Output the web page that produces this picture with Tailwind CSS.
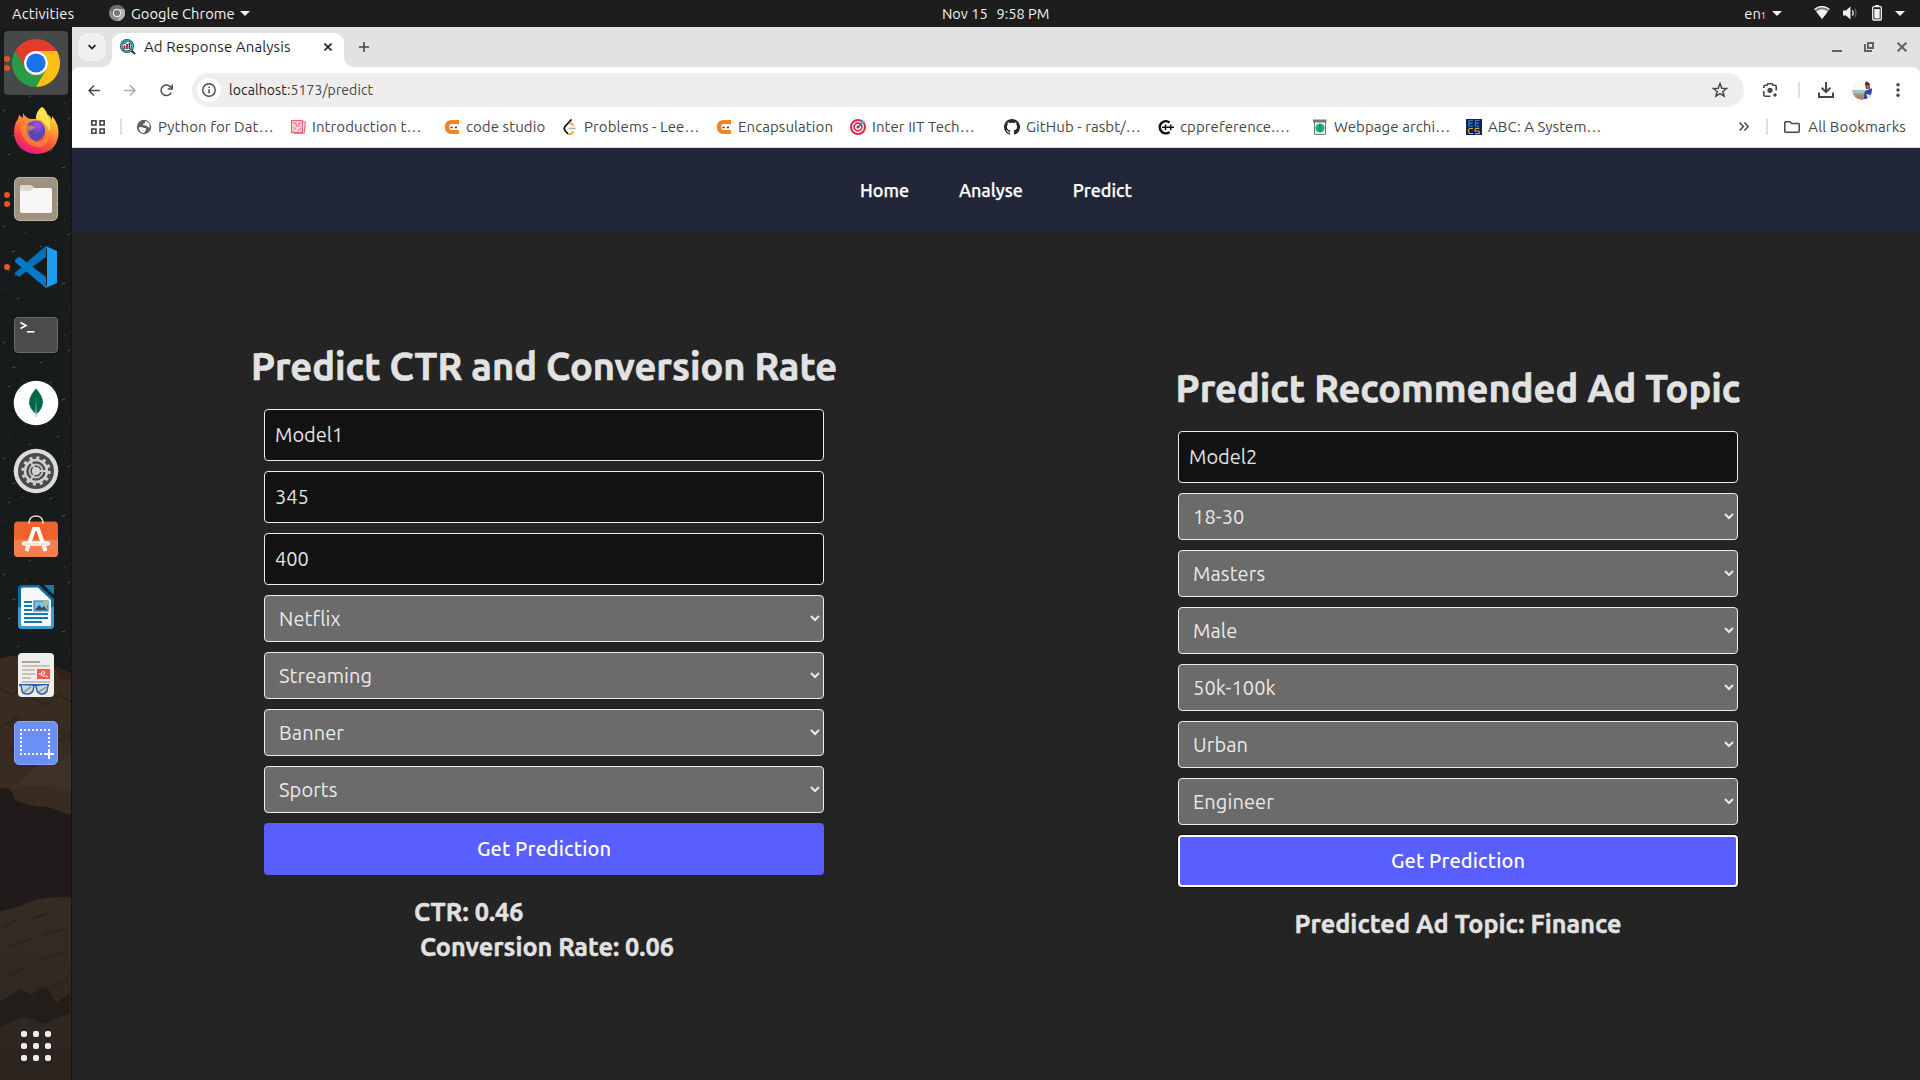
<!DOCTYPE html>
<html lang="en">
<head>
<meta charset="utf-8">
<title>Ad Response Analysis</title>
<script src="https://cdn.jsdelivr.net/npm/@tailwindcss/browser@4"></script>
</head>
<body class="w-[1920px] h-[1080px] overflow-hidden flex flex-col bg-[#242424] font-['Ubuntu','Noto_Sans',sans-serif] text-[15px] tracking-[0.12px]">

<!-- GNOME top bar -->
<header class="h-[27px] shrink-0 bg-[#1d1d1d] text-[#f2f2f2] text-[14.7px] tracking-[0.05px] flex items-center">
  <div class="flex items-center pl-3 w-[942px]">
    <span class="pt-[2px] w-[97px] tracking-[0.2px]">Activities</span>
    <svg class="size-4" viewBox="0 0 16 16"><circle cx="8" cy="8" r="8" fill="#8b8b8b"/><path d="M8 4h7A8 8 0 0 0 1 4l3.500 6A4 4 0 0 1 8 4Z" fill="#6d6d6d"/><path d="M15 4H8a4 4 0 0 1 3.500 6L8 16A8 8 0 0 0 15 4Z" fill="#b4b4b4"/><circle cx="8" cy="8" r="4.200" fill="#eee"/><circle cx="8" cy="8" r="3" fill="#777"/></svg>
    <span class="pt-[2px] ml-[6px]">Google Chrome</span>
    <svg class="ml-[5px] w-[10px] h-[5px]" viewBox="0 0 10 5"><path d="M0 0h10L5 5Z" fill="#f2f2f2"/></svg>
  </div>
  <div class="flex gap-[9px] text-[14.5px] tracking-normal"><span>Nov 15</span><span>9:58 PM</span></div>
  <div class="ml-auto flex items-center justify-end pr-[15px]">
    <span class="pt-[2px]">en<span class="text-[9px]">1</span></span>
    <svg class="ml-[6px] w-[10px] h-[5px]" viewBox="0 0 10 5"><path d="M0 0h10L5 5Z" fill="#f2f2f2"/></svg>
    <svg class="ml-[32px] w-4 h-[14px]" viewBox="0 0 16 14"><path d="M.5 3.500Q8-2.500 15.500 3.500L8 13Z" fill="#777"/><path d="M.5 3.500Q8-2.500 15.500 3.500" fill="none" stroke="#f2f2f2" stroke-width="1.300"/><path d="M2.200 5.500Q8 1 13.800 5.500L8 13Z" fill="#f2f2f2"/></svg>
    <svg class="ml-[12px] w-4 h-[14px]" viewBox="0 0 16 14"><path d="M1 4.500h3L8.500.5v13L4 9.500H1Z" fill="#f2f2f2"/><path d="M10.300 4.300q2 2.700 0 5.400" fill="none" stroke="#ddd" stroke-width="1.300"/><path d="M12.500 2.500q3.200 4.500 0 9" fill="none" stroke="#666" stroke-width="1.200"/></svg>
    <svg class="ml-[14px] w-[10px] h-4" viewBox="0 0 10 16"><path d="M3 0h4v1.500H3Z" fill="#f2f2f2"/><rect x=".7" y="1.700" width="8.600" height="13.300" rx="1" fill="none" stroke="#f2f2f2" stroke-width="1.300"/><rect x="2.300" y="4" width="5.400" height="9.500" fill="#f2f2f2"/></svg>
    <svg class="ml-[13px] w-[10px] h-[5px]" viewBox="0 0 10 5"><path d="M0 0h10L5 5Z" fill="#f2f2f2"/></svg>
  </div>
</header>

<div class="flex flex-1 min-h-0">

<!-- Dock -->
<aside class="relative w-[72px] shrink-0 flex flex-col">
  <svg class="absolute inset-0 w-[72px] h-[1053px]" viewBox="0 0 72 1053">
    <defs>
      <pattern id="stars" width="72" height="116" patternUnits="userSpaceOnUse"><g stroke="#4a4e4f" stroke-width="1" stroke-linecap="round"><path d="M8 12l2-1M50 8l2-1M62 25l3-1M17 40l2-1M29 70l2-1M57 62l2-1M3 84l2-1M68 92l2-1M40 104l2-1M12 109l3-1"/></g><g stroke="#303435" stroke-width="1"><path d="M22 6l2-1M36 22l1-1M4 30l2-1M68 48l2-1M47 45l1-1M9 62l2-1M64 77l2-1M24 90l2-1M54 98l2-1M5 98l1-1M44 76l2-1M33 52l1-1"/></g></pattern>
      <linearGradient id="hill" x1="0" y1="0" x2="0" y2="1"><stop offset="0" stop-color="#372c23"/><stop offset="1" stop-color="#2b241f"/></linearGradient>
    </defs>
    <rect width="72" height="1053" fill="#171b1b"/>
    <rect width="72" height="650" fill="url(#stars)"/>
    <path d="M0 632Q10 627 20 629L34 634 52 640Q60 646 72 653V800H0Z" fill="#382c21"/>
    <path d="M56 640L72 646V654L60 652Z" fill="#33201d"/>
    <path d="M0 662L12 668 24 660 32 672 46 678 60 668 72 676M0 700L18 690 30 704 50 700 72 712M8 726L28 714 44 722 72 706M24 752L48 736 60 745 72 738" fill="none" stroke="#2c231d" stroke-width="1.500"/>
    <path d="M10 762Q30 748 44 732L60 734 72 730V764L40 758Z" fill="#3e3228"/>
    <path d="M0 762Q12 758 14 772Q28 780 48 780L72 788V900H0Z" fill="#211a1a"/>
    <path d="M0 884Q16 882 26 876Q46 868 72 871V1053H0Z" fill="url(#hill)"/>
    <path d="M4 900l14-8M30 892l20-6M10 920l22-8M44 908l20-6M8 950l18-10M38 934l24-8M52 960l16-6M22 972l20-10" stroke="#2a221c" stroke-width="1.500"/>
    <path d="M0 975L20 962 32 968 46 960 56 976 70 966V986L44 996 24 990 0 1000Z" fill="#231d1a"/>
    <rect x="71" width="1" height="1053" fill="#141414"/>
  </svg>
  <nav class="relative flex flex-col gap-1 p-1 flex-1">
    <div class="relative size-16 rounded bg-[#474949] flex items-center justify-center">
      <span class="absolute left-0 top-[25px] flex flex-col gap-[3px]"><i class="size-[6px] rounded-full bg-[#e95420]"></i><i class="size-[6px] rounded-full bg-[#e95420]"></i></span>
      <svg class="size-12" viewBox="0 0 48 48"><path d="M24 12H44.780A24 24 0 0 0 3.220 12L13.610 30A12 12 0 0 1 24 12Z" fill="#e33b2e"/><path d="M3.220 12A24 24 0 0 0 24 48L34.390 30A12 12 0 0 1 13.610 30Z" fill="#2a9c47"/><path d="M44.780 12H24A12 12 0 0 1 34.390 30L24 48A24 24 0 0 0 44.780 12Z" fill="#fcc014"/><circle cx="24" cy="24" r="12" fill="#fff"/><circle cx="24" cy="24" r="9.600" fill="#1a73e8"/></svg>
    </div>
    <div class="size-16 flex items-center justify-center">
      <svg class="size-12" viewBox="0 0 48 48"><defs><linearGradient id="fx" x1=".8" y1="0" x2=".3" y2="1"><stop offset="0" stop-color="#fff44f"/><stop offset=".35" stop-color="#ffa52a"/><stop offset=".7" stop-color="#ff4a3f"/><stop offset="1" stop-color="#e31587"/></linearGradient><radialGradient id="fp" cx=".6" cy=".2"><stop offset="0" stop-color="#a450f0"/><stop offset="1" stop-color="#5b45b0"/></radialGradient></defs>
        <path d="M30 0Q33 2 34 7Q38 8 40 13L40 9Q47 17 46.500 27Q45 46 24 47Q3 45 2 25Q2 17 6 12L7 8L11 11L11 6Q13 10 18 12L24 12Q24 4 30 0Z" fill="url(#fx)"/>
        <path d="M30 0Q24 4 24 12Q34 14 37 24Q40 17 36 10Q34 2 30 0Z" fill="#ffe34a"/>
        <path d="M15 18Q20 12 28 14Q34 18 33 26Q30 34 24 34Q15 33 14 24Z" fill="url(#fp)"/>
        <path d="M8 20Q13 16 24 20Q21 23 16 24Q17 32 24 35Q33 35 36 27Q38 39 27 40Q12 40 8 20Z" fill="#ff9a2e" opacity=".6"/></svg>
    </div>
    <div class="relative size-16 flex items-center justify-center">
      <span class="absolute left-0 top-[25px] flex flex-col gap-[3px]"><i class="size-[6px] rounded-full bg-[#e95420]"></i><i class="size-[6px] rounded-full bg-[#e95420]"></i></span>
      <svg class="size-12" viewBox="0 0 48 48"><rect x="2.500" y="2.500" width="43" height="43" rx="5" fill="#9c927f" stroke="#bcb6a5"/><path d="M8 12q0-2 2-2h9l4 3v9H8Z" fill="#dedacb"/><rect x="8" y="13" width="32" height="25" rx="2" fill="#f8f7f5"/><path d="M8 16l10-0 4-3H10Q8 13 8 15Z" fill="#dedacb"/></svg>
    </div>
    <div class="relative size-16 flex items-center justify-center">
      <i class="absolute left-0 top-[29px] size-[6px] rounded-full bg-[#e95420]"></i>
      <svg class="size-12" viewBox="0 0 48 48"><path d="M33 3L7 31q-2 1-3 2l-1-1q-1-2 1-3L30 6Z" fill="#0065a9"/><path d="M3 30L7 34 34 14V3Z" fill="#0a70b6"/><path d="M3 17L7 13.500 34 34V45L3 19Z" fill="#007acc"/><path d="M33.500 3L45 8V40L33.500 45Q35 43 35 40V8Q35 5 33.500 3Z" fill="#1f9cf0"/></svg>
    </div>
    <div class="size-16 flex items-center justify-center">
      <svg class="size-12" viewBox="0 0 48 48"><rect x="2.500" y="6.500" width="43" height="35" rx="3.500" fill="#4b4b4b" stroke="#6a6a6a"/><path d="M8.500 11.500L14 14.500 8.500 17.500" fill="none" stroke="#fff" stroke-width="1.600"/><path d="M15 20.800h7.500" stroke="#fff" stroke-width="1.600"/></svg>
    </div>
    <div class="size-16 flex items-center justify-center">
      <svg class="size-12" viewBox="0 0 48 48"><circle cx="24" cy="24" r="22.300" fill="#fff"/><path d="M24 9.500Q31 17 31 23.500Q30 31 24.500 35Q18 31 17 24Q17 17 24 9.500Z" fill="#00684a"/><path d="M24 19l.8 19h-1.500Z" fill="#a9c8bb"/></svg>
    </div>
    <div class="size-16 flex items-center justify-center">
      <svg class="size-12" viewBox="0 0 48 48"><circle cx="24" cy="24" r="22.300" fill="#dcdcdc"/><circle cx="24" cy="24" r="18" fill="#4a4a4a"/><circle cx="24" cy="24" r="13" fill="none" stroke="#cfcfcf" stroke-width="3.500" stroke-dasharray="3 3.800"/><circle cx="24" cy="24" r="11" fill="none" stroke="#cfcfcf" stroke-width="2.600"/><circle cx="24" cy="24" r="6.500" fill="none" stroke="#c4c4c4" stroke-width="1.800"/><circle cx="24" cy="24" r="4" fill="#d6d6d6"/><path d="M24 24h11M24 24L18.500 14.500M24 24L18.500 33.500" stroke="#cfcfcf" stroke-width="2"/></svg>
    </div>
    <div class="size-16 flex items-center justify-center">
      <svg class="size-12" viewBox="0 0 48 48"><rect x="2" y="6.500" width="44" height="35.500" rx="4" fill="#ef622c"/><path d="M2 24.500H46V38q0 4-4 4H6q-4 0-4-4Z" fill="#f47e4e"/><path d="M17 9V7q1-6 7-6t7 6v2" fill="none" stroke="#f5dcb4" stroke-width="1.500"/><path d="M14.500 36L22 14H26L33.500 36" fill="none" stroke="#fff" stroke-width="4"/><path d="M12 28.500H36" stroke="#fff" stroke-width="4.500" stroke-linecap="round"/><path d="M12 29H36" stroke="#f5b79c" stroke-width=".8"/></svg>
    </div>
    <div class="size-16 flex items-center justify-center">
      <svg class="size-12" viewBox="0 0 48 48"><path d="M10 2H27L42 16V42q0 4-4 4H10q-4 0-4-4V6q0-4 4-4Z" fill="#0d6ba4"/><path d="M6 24H42V42q0 4-4 4H10q-4 0-4-4Z" fill="#3d9ccc"/><path d="M11 4.500H26L39 17V43H11q-2 0-2-2V6.500q0-2 2-2Z" fill="#f7f7f7"/><path d="M32 2h10v10Z" fill="#1378b0"/><g stroke="#1279b3" stroke-width="2"><path d="M12 19h8M12 23h8M12 27h8M12 31h24M12 35h24M12 39h18"/></g><rect x="22" y="18" width="14" height="10" fill="#7fc0e8" stroke="#1279b3"/><path d="M23 27l4-5 3 3 2-2 3 4Z" fill="#444"/><path d="M31 18h5v4q-3 0-5-4Z" fill="#f0b429"/></svg>
    </div>
    <div class="size-16 flex items-center justify-center">
      <svg class="size-12" viewBox="0 0 48 48"><rect x="6" y="2" width="36" height="44" rx="4" fill="#efeeec"/><path d="M10 11h18" stroke="#aba496" stroke-width="2"/><path d="M10 15h28M10 19h13M10 23h13M10 27h9M10 31h28" stroke="#c6c2b8" stroke-width="2"/><rect x="25" y="18" width="13" height="10" fill="#f25a4c"/><path d="M27 23q4 1 6-1-1-3-3-1-2 4 1 4 3-1 5 1" fill="none" stroke="#fff"/><path d="M7 34H37" stroke="#2360a8" stroke-width="2"/><path d="M9 34l1 6q1 3 5 3t6-3l1-5M24 35l1 5q2 3 5 3t5-3l1-6" fill="#cfd3da" stroke="#2d62a5" stroke-width="1.500"/><path d="M12 41l7-5M27 41l7-5" stroke="#84888f" stroke-width="1.500"/></svg>
    </div>
    <div class="size-16 flex items-center justify-center">
      <svg class="size-12" viewBox="0 0 48 48"><rect x="2.500" y="2.500" width="43" height="43" rx="4.500" fill="#6a90f5" stroke="#86a6fa"/><path d="M8 11H38M8 35H32" stroke="#fff" stroke-width="2" stroke-dasharray="2 2"/><path d="M9 14V34M37 14V30" stroke="#fff" stroke-width="2" stroke-dasharray="2 2"/><path d="M37 30V40M32 35H42" stroke="#fff" stroke-width="2"/></svg>
    </div>
    <div class="mt-auto mb-[14px] self-center grid grid-cols-3 gap-[6px] pb-px">
      <i class="size-[6px] rounded-[2px] bg-[#eee]"></i><i class="size-[6px] rounded-[2px] bg-[#eee]"></i><i class="size-[6px] rounded-[2px] bg-[#eee]"></i>
      <i class="size-[6px] rounded-[2px] bg-[#eee]"></i><i class="size-[6px] rounded-[2px] bg-[#eee]"></i><i class="size-[6px] rounded-[2px] bg-[#eee]"></i>
      <i class="size-[6px] rounded-[2px] bg-[#eee]"></i><i class="size-[6px] rounded-[2px] bg-[#eee]"></i><i class="size-[6px] rounded-[2px] bg-[#eee]"></i>
    </div>
  </nav>
</aside>

<!-- Browser window -->
<section class="flex-1 min-w-0 flex flex-col bg-[#242424]">

  <!-- Tab strip -->
  <div class="h-10 shrink-0 bg-[#e2e2e2] flex pl-[6px] pt-[6px] text-[#1f1f1f]">
    <button class="size-7 rounded-[10px] bg-[#f0f0f0] flex items-center justify-center"><svg class="size-2" viewBox="0 0 8 8"><path d="M.6 2.200L4 5.600 7.400 2.200" fill="none" stroke="#1f1f1f" stroke-width="1.800"/></svg></button>
    <div class="relative ml-[6px] w-[232px] h-[34px] rounded-t-[10px] bg-white flex items-center pl-2 pb-[6px]">
      <svg class="absolute -left-[10px] bottom-0 size-[10px]" viewBox="0 0 10 10"><path d="M10 0V10H0A10 10 0 0 0 10 0Z" fill="#fff"/></svg>
      <svg class="absolute -right-[10px] bottom-0 size-[10px]" viewBox="0 0 10 10"><path d="M0 0V10H10A10 10 0 0 1 0 0Z" fill="#fff"/></svg>
      <svg class="size-4" viewBox="0 0 16 16"><path d="M11 11l4 4" stroke="#333" stroke-width="2"/><circle cx="7" cy="7" r="5.800" fill="#e9e4e4" stroke="#173f4c" stroke-width="2.400"/><circle cx="7" cy="7" r="5.800" fill="none" stroke="#27b5c0" stroke-width="1.300"/><path d="M4.500 10V6.500M7 10V5M9.500 10V4" stroke="#7a2320" stroke-width="1.600"/><path d="M3.500 5l3-1.500" stroke="#333"/></svg>
      <span class="ml-2">Ad Response Analysis</span>
      <svg class="ml-auto mr-[12px] size-2" viewBox="0 0 8 8"><path d="M.5.5l7 7M7.500.5l-7 7" stroke="#1f1f1f" stroke-width="1.600"/></svg>
    </div>
    <svg class="ml-[15px] mt-[9px] size-[10px]" viewBox="0 0 10 10"><path d="M5 0V10M0 5H10" stroke="#444" stroke-width="1.500"/></svg>
    <div class="ml-auto flex items-center pr-[13px] pb-[6px]">
      <svg class="size-[10px]" viewBox="0 0 10 10"><path d="M0 9H10" stroke="#5f6368" stroke-width="2"/></svg>
      <svg class="ml-[22px] size-[10px]" viewBox="0 0 10 10"><path d="M1 2V9H8" fill="none" stroke="#5f6368" stroke-width="2"/><rect x="4" y="1" width="5" height="5" fill="none" stroke="#5f6368" stroke-width="2"/></svg>
      <svg class="ml-[23px] size-[10px]" viewBox="0 0 10 10"><path d="M.6.600l8.800 8.800M9.400.600L.6 9.400" stroke="#5f6368" stroke-width="2"/></svg>
    </div>
  </div>

  <div class="shrink-0 bg-[#e2e2e2]"><div class="bg-white rounded-t-[8px]">
    <!-- Toolbar -->
    <div class="h-[46px] flex items-center pl-4 pr-[14px] text-[#474747]">
      <svg class="w-3 h-[11px]" viewBox="0 0 12 11"><path d="M12 5.500H1M6 .5L1 5.500l5 5" fill="none" stroke="#474747" stroke-width="1.500"/></svg>
      <svg class="ml-6 w-3 h-[11px]" viewBox="0 0 12 11"><path d="M0 5.500H11M6 .5l5 5-5 5" fill="none" stroke="#aaa" stroke-width="1.500"/></svg>
      <svg class="ml-6 size-[13px]" viewBox="0 0 13 13"><path d="M11.200 8.500A5.300 5.300 0 1 1 10.600 3L12 4.600" fill="none" stroke="#474747" stroke-width="1.500"/><path d="M12.200.5V5H7.700" fill="none" stroke="#474747" stroke-width="1.500"/></svg>
      <div class="ml-[19px] w-[1552px] h-[34px] rounded-full bg-[#efedee] flex items-center pl-[5px] pr-[16px] text-[14px] tracking-[0.1px]">
        <span class="size-6 rounded-full bg-white flex items-center justify-center"><svg class="size-[14px]" viewBox="0 0 14 14"><circle cx="7" cy="7" r="6.200" fill="none" stroke="#474747" stroke-width="1.400"/><path d="M7 6.200V10.200M7 3.700V5.100" stroke="#474747" stroke-width="1.500"/></svg></span>
        <span class="ml-2 text-[#1f1f1f]">localhost<span class="text-[#474747]">:5173/predict</span></span>
        <svg class="ml-auto size-4" viewBox="0 0 16 16"><path d="M8 1.600L9.800 6.200 14.600 6.500 10.900 9.500 12.100 14.200 8 11.600 3.900 14.200 5.100 9.500 1.400 6.500 6.200 6.200Z" fill="none" stroke="#474747" stroke-width="1.500"/></svg>
      </div>
      <svg class="ml-[19px] size-[14px]" viewBox="0 0 14 14"><path d="M.8 5V3.500Q.8 2.300 2 2.300H4L4.800.8H9.200L10 2.300h2q1.200 0 1.200 1.200V7.500M.8 8v3.500q0 1.700 1.700 1.700H7.500" fill="none" stroke="#474747" stroke-width="1.600"/><circle cx="7" cy="7.300" r="2.600" fill="#474747"/><circle cx="12" cy="12" r="1.700" fill="#474747"/></svg>
      <i class="ml-[21px] w-[2px] h-4 bg-[#e0dfe0]"></i>
      <svg class="ml-[18px] size-4" viewBox="0 0 16 16"><path d="M8 0V10M3.700 5.800L8 10.100 12.300 5.800M1 10.500V15H15V10.500" fill="none" stroke="#474747" stroke-width="2"/></svg>
      <svg class="ml-[18px] size-5" viewBox="0 0 20 20"><defs><clipPath id="av"><circle cx="10" cy="10" r="10"/></clipPath></defs><g clip-path="url(#av)"><path d="M0 0H20V20H0Z" fill="#f6f8f8"/><path d="M0 10H13V13H0Z" fill="#a9c3c4"/><path d="M0 13H13V16H0Z" fill="#8fae9c"/><path d="M13 4q1-4 5-3v8h-4Z" fill="#5b2a24"/><path d="M14 5h4v4h-3Z" fill="#a8614c"/><path d="M13 11l7-3v11H11Z" fill="#2b46a8"/><path d="M2 16q6-3 10-1l-1 5H4Z" fill="#b5826c"/><path d="M14 14l5 1-3 4Z" fill="#dfe6f7"/></g></svg>
      <svg class="ml-[24px] w-1 h-[14px]" viewBox="0 0 4 14"><g fill="#474747"><circle cx="2" cy="1.700" r="1.700"/><circle cx="2" cy="7" r="1.700"/><circle cx="2" cy="12.300" r="1.700"/></g></svg>
    </div>

    <!-- Bookmarks -->
    <div class="h-[35px] pb-[7px] border-b border-[#dcdcdc] flex items-center pl-[19px] pr-[14px] text-[#474747] whitespace-nowrap tracking-[0.08px] [&_span]:pt-[2px]">
      <svg class="size-[14px]" viewBox="0 0 14 14"><g fill="none" stroke="#474747" stroke-width="1.600"><rect x=".8" y=".8" width="4.200" height="4.200"/><rect x="9" y=".8" width="4.200" height="4.200"/><rect x=".8" y="9" width="4.200" height="4.200"/><rect x="9" y="9" width="4.200" height="4.200"/></g></svg>
      <i class="ml-[15px] w-[2px] h-4 bg-[#e0dfe0]"></i>
      <div class="ml-[14px] w-[154px] flex items-center gap-[6px]"><svg class="size-4" viewBox="0 0 16 16"><circle cx="8" cy="8" r="7.200" fill="#5f6368"/><path d="M2.500 8.500q3-1 4.500 0t3 .5v2l-2 3q-4 0-5.500-5.500ZM9 2v2L7 5v1l3 .5L13.500 9V5Q12 2.500 9 2Z" fill="#fff"/></svg><span>Python for Dat…</span></div>
      <div class="w-[154px] flex items-center gap-[6px]"><svg class="size-4" viewBox="0 0 16 16"><path d="M13 2.500l2.300.7-1.200 11-10 .2" fill="none" stroke="#ee6a84" stroke-width="1.300"/><rect x="1.500" y="1.500" width="11" height="12" fill="#fbd4da" stroke="#ee6078" stroke-width="1.200"/><path d="M3 4h3v3h3V4h2M3 11l3-2M8 12l3-3M4 9v-1" fill="none" stroke="#ee6a80"/></svg><span>Introduction t…</span></div>
      <div class="w-[118px] flex items-center gap-[6px]"><svg class="size-4" viewBox="0 0 16 16"><path d="M15 3H8Q3 3 3 8t5 5h7" fill="none" stroke="#f5811f" stroke-width="4.200"/><path d="M6.500 8.500h2M11 8.500h2" stroke="#333" stroke-width="1.300"/></svg><span>code studio</span></div>
      <div class="w-[154px] flex items-center gap-[6px]"><svg class="size-4" viewBox="0 0 16 16"><path d="M9.500.5L3 7.500q-1.500 2 0 4L6 15" fill="none" stroke="#111" stroke-width="1.800"/><path d="M7 4.500q2-1 4.500 2M6 15q3 1 5.500-2.500" fill="none" stroke="#f9a01b" stroke-width="1.800"/><path d="M6.500 9.500h7" stroke="#b3b3b3" stroke-width="1.700"/></svg><span>Problems - Lee…</span></div>
      <div class="w-[134px] flex items-center gap-[6px]"><svg class="size-4" viewBox="0 0 16 16"><path d="M15 3H8Q3 3 3 8t5 5h7" fill="none" stroke="#f5811f" stroke-width="4.200"/><path d="M6.500 8.500h2M11 8.500h2" stroke="#333" stroke-width="1.300"/></svg><span>Encapsulation</span></div>
      <div class="w-[154px] flex items-center gap-[6px]"><svg class="size-4" viewBox="0 0 16 16"><circle cx="8" cy="8" r="7" fill="#fff" stroke="#e0244f" stroke-width="2"/><circle cx="8" cy="8" r="3.900" fill="#fff" stroke="#e0244f" stroke-width="1.700"/><circle cx="8" cy="8" r="1.600" fill="#e0244f"/><path d="M8 8l5-5" stroke="#4b5560" stroke-width="1.200"/><path d="M10.500 4L13 .5l.5 2 2 .5L12 5.500Z" fill="#55acee"/></svg><span>Inter IIT Tech…</span></div>
      <div class="w-[154px] flex items-center gap-[6px]"><svg class="size-4" viewBox="0 0 16 16"><path fill="#24292f" d="M8 0C3.580 0 0 3.580 0 8c0 3.540 2.290 6.530 5.470 7.590.4.070.55-.17.55-.38 0-.19-.010-.82-.010-1.490-2.010.37-2.530-.49-2.690-.94-.09-.23-.48-.94-.82-1.130-.28-.15-.68-.52-.01-.53.63-.01 1.080.58 1.230.82.72 1.210 1.870.87 2.330.66.07-.52.28-.87.51-1.070-1.780-.2-3.640-.89-3.640-3.950 0-.87.31-1.590.82-2.150-.08-.2-.36-1.020.08-2.120 0 0 .67-.21 2.200.82.64-.18 1.320-.27 2-.27s1.360.09 2 .27c1.530-1.040 2.200-.82 2.200-.82.44 1.100.16 1.920.08 2.120.51.56.82 1.270.82 2.150 0 3.070-1.870 3.750-3.650 3.950.29.25.54.73.54 1.480 0 1.070-.01 1.930-.01 2.200 0 .21.15.46.55.38A8.010 8.010 0 0 0 16 8c0-4.420-3.580-8-8-8Z"/></svg><span>GitHub - rasbt/…</span></div>
      <div class="w-[154px] flex items-center gap-[6px]"><svg class="size-4" viewBox="0 0 16 16"><path d="M11.500 3.500A6 6 0 1 0 11.500 13" fill="none" stroke="#111" stroke-width="2.600"/><path d="M4 8.300H16M7.500 5.500V11.200M12.700 5.500V11.200" stroke="#111" stroke-width="1.500"/></svg><span>cppreference.…</span></div>
      <div class="w-[154px] flex items-center gap-[6px]"><svg class="size-4" viewBox="0 0 16 16"><path d="M2.500 3V15.400H13.500V3" fill="#eef4f2" stroke="#777"/><path d="M1 .5H14.500V3.500H1Z" fill="#777"/><circle cx="8" cy="9" r="4.600" fill="#2bc48a"/><path d="M3.500 9h9M8 4.500v9M4.500 6.700h7M4.500 11.300h7" stroke="#157a55" stroke-width=".7"/></svg><span>Webpage archi…</span></div>
      <div class="w-[154px] flex items-center gap-[6px]"><svg class="size-4" viewBox="0 0 16 16"><rect width="16" height="16" fill="#11205a"/><path d="M7 1.500H3V7H7M3 4.200H6.500M13.500 1.500H9.500V7H13.500M9.500 4.200H13" fill="none" stroke="#2b83c6" stroke-width="1.200"/><path d="M7 9.500H4Q2.500 9.500 2.500 12T4 14.500H7M13.500 9.300H10Q9 9.500 9 11T10 12H12.500Q13.500 12 13.500 13.500T12.500 14.700H9" fill="none" stroke="#d8a828" stroke-width="1.200"/></svg><span>ABC: A System…</span></div>
      <svg class="ml-auto w-[10px] h-[9px]" viewBox="0 0 10 9"><path d="M.6.600L4.400 4.500.6 8.400M5.400.600L9.200 4.500 5.400 8.400" fill="none" stroke="#474747" stroke-width="1.500"/></svg>
      <i class="ml-[17px] w-[2px] h-4 bg-[#e0dfe0]"></i>
      <svg class="ml-[16px] w-4 h-3" viewBox="0 0 16 12"><path d="M.8 1.500Q.8.8 1.500.8H6L7.600 2.500H14.500q.7 0 .7.700V10.500q0 .7-.7.700H1.500q-.7 0-.7-.7Z" fill="none" stroke="#474747" stroke-width="1.500"/></svg>
      <span class="ml-2 tracking-[0.12px]">All Bookmarks</span>
    </div>
  </div></div>

  <!-- Site navigation -->
  <nav class="h-[85px] shrink-0 bg-[#212638] flex justify-center items-center gap-[50px] text-white text-[18px] tracking-[-0.05px] font-medium [-webkit-text-stroke:0.25px_white]">
    <a>Home</a><a>Analyse</a><a>Predict</a>
  </nav>

  <main class="flex-1 flex tracking-normal text-[#e2e2e2]">
    <form class="w-[944px] flex flex-col items-center pt-[108px]">
      <h2 class="text-[38px] leading-[50px] font-bold whitespace-nowrap [-webkit-text-stroke:0.6px_#e2e2e2]">Predict CTR and Conversion Rate</h2>
      <div class="mt-[18px] w-[560px] flex flex-col gap-[10px] text-[20px]">
        <input class="h-[52px] border border-[#ececec] rounded bg-[#121212] px-[10px] pb-[2px]" value="Model1">
        <input class="h-[52px] border border-[#ececec] rounded bg-[#121212] px-[10px] pb-[2px]" value="345">
        <input class="h-[52px] border border-[#ececec] rounded bg-[#121212] px-[10px] pb-[2px]" value="400">
        <select class="h-[47px] border border-[#ececec] rounded bg-[#6b6b6b] px-[10px] tracking-[0.1px] text-[#e9e9e9]"><option>Netflix</option></select>
        <select class="h-[47px] border border-[#ececec] rounded bg-[#6b6b6b] px-[10px] tracking-[0.1px] text-[#e9e9e9]"><option>Streaming</option></select>
        <select class="h-[47px] border border-[#ececec] rounded bg-[#6b6b6b] px-[10px] tracking-[0.1px] text-[#e9e9e9]"><option>Banner</option></select>
        <select class="h-[47px] border border-[#ececec] rounded bg-[#6b6b6b] px-[10px] tracking-[0.1px] text-[#e9e9e9]"><option>Sports</option></select>
        <button type="button" class="h-[52px] rounded bg-[#585eff] text-white text-[20px] font-medium tracking-[0.15px]">Get Prediction</button>
      </div>
      <div class="mt-[20px] w-[260px] text-[25.2px] leading-[35px] font-bold whitespace-nowrap [-webkit-text-stroke:0.4px_#e2e2e2]">
        <p>CTR: 0.46</p>
        <p class="pl-[6px]">Conversion Rate: 0.06</p>
      </div>
    </form>
    <form class="w-[884px] flex flex-col items-center pt-[130px]">
      <h2 class="text-[38px] leading-[50px] font-bold whitespace-nowrap [-webkit-text-stroke:0.6px_#e2e2e2]">Predict Recommended Ad Topic</h2>
      <div class="mt-[18px] w-[560px] flex flex-col gap-[10px] text-[20px]">
        <input class="h-[52px] border border-[#ececec] rounded bg-[#121212] px-[10px] pb-[2px]" value="Model2">
        <select class="h-[47px] border border-[#ececec] rounded bg-[#6b6b6b] px-[10px] tracking-[0.1px] text-[#e9e9e9]"><option>18-30</option></select>
        <select class="h-[47px] border border-[#ececec] rounded bg-[#6b6b6b] px-[10px] tracking-[0.1px] text-[#e9e9e9]"><option>Masters</option></select>
        <select class="h-[47px] border border-[#ececec] rounded bg-[#6b6b6b] px-[10px] tracking-[0.1px] text-[#e9e9e9]"><option>Male</option></select>
        <select class="h-[47px] border border-[#ececec] rounded bg-[#6b6b6b] px-[10px] tracking-[0.1px] text-[#e9e9e9]"><option>50k-100k</option></select>
        <select class="h-[47px] border border-[#ececec] rounded bg-[#6b6b6b] px-[10px] tracking-[0.1px] text-[#e9e9e9]"><option>Urban</option></select>
        <select class="h-[47px] border border-[#ececec] rounded bg-[#6b6b6b] px-[10px] tracking-[0.1px] text-[#e9e9e9]"><option>Engineer</option></select>
        <button type="button" class="h-[52px] rounded border-2 border-white ring-1 ring-[#101010] bg-[#585eff] text-white text-[20px] font-medium tracking-[0.15px]">Get Prediction</button>
      </div>
      <p class="mt-[20px] text-[25.2px] leading-[35px] font-bold tracking-[0.05px] whitespace-nowrap [-webkit-text-stroke:0.4px_#e2e2e2]">Predicted Ad Topic: Finance</p>
    </form>
  </main>
</section>
</div>
</body>
</html>
